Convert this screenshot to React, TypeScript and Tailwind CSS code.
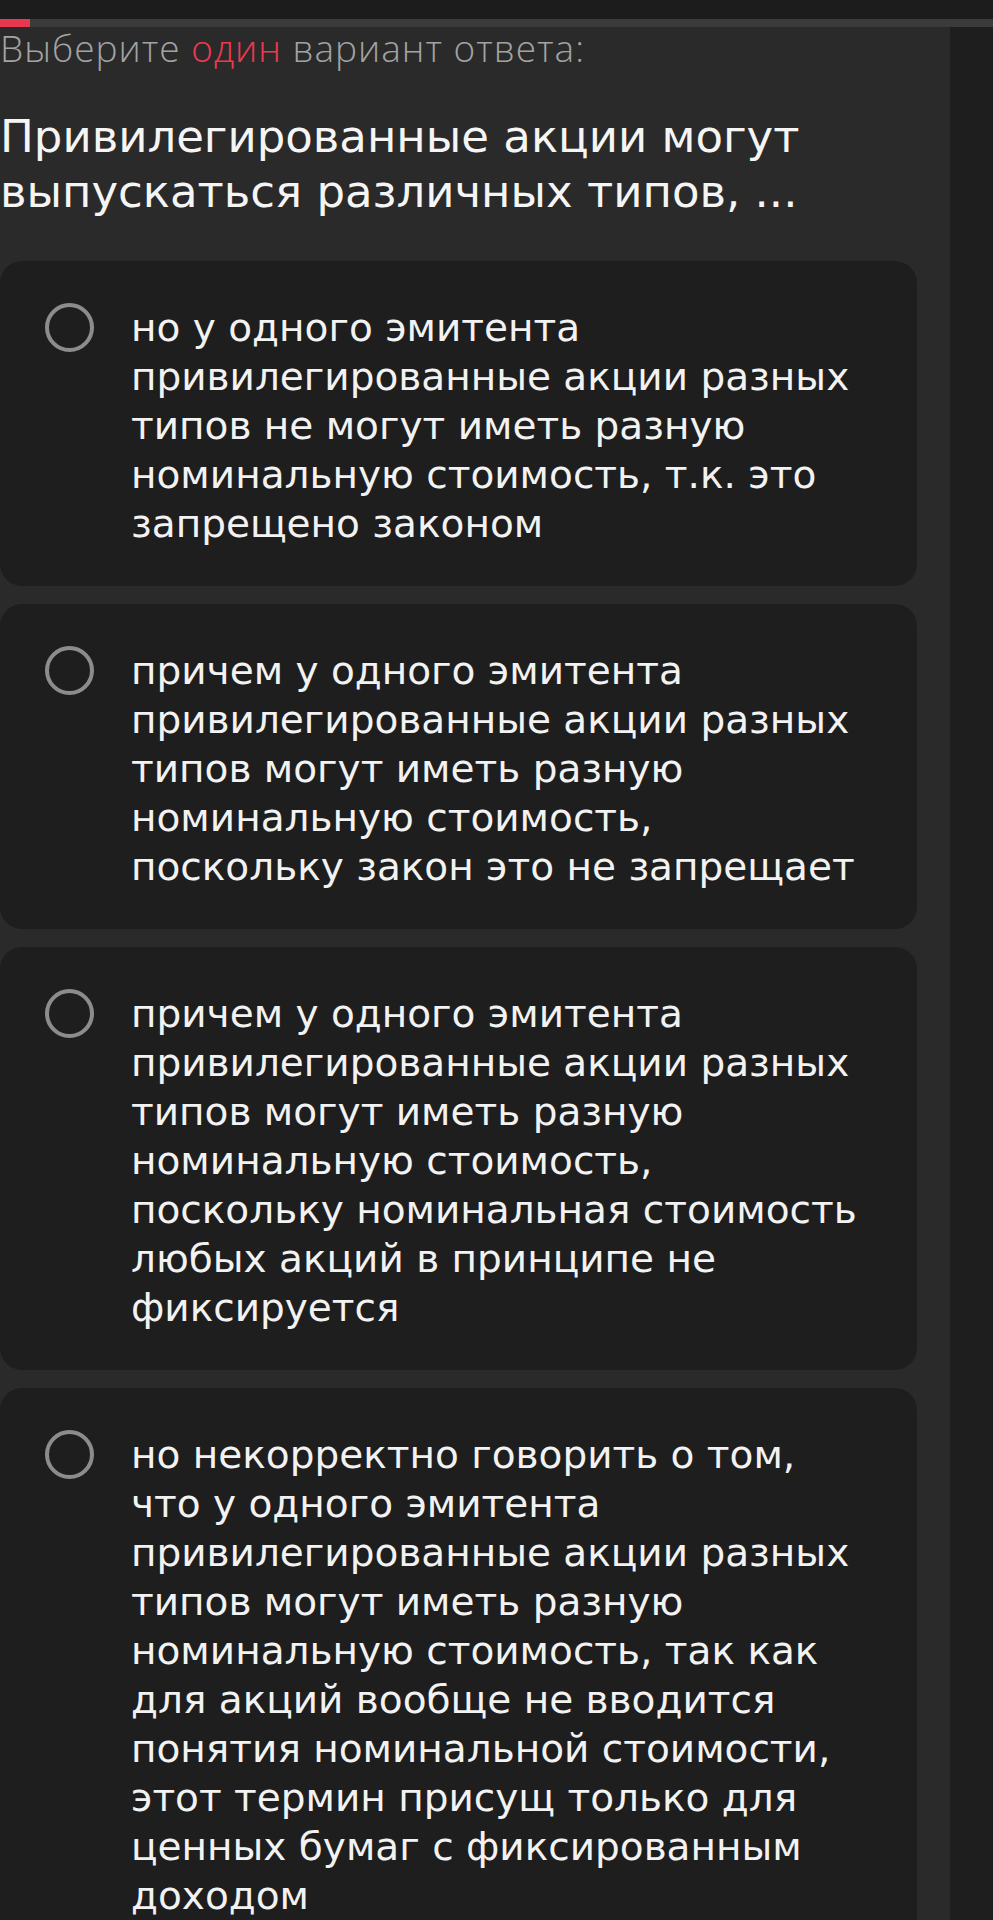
const options: string[][] = [
  [
    "но у одного эмитента",
    "привилегированные акции разных",
    "типов не могут иметь разную",
    "номинальную стоимость, т.к. это",
    "запрещено законом",
  ],
  [
    "причем у одного эмитента",
    "привилегированные акции разных",
    "типов могут иметь разную",
    "номинальную стоимость,",
    "поскольку закон это не запрещает",
  ],
  [
    "причем у одного эмитента",
    "привилегированные акции разных",
    "типов могут иметь разную",
    "номинальную стоимость,",
    "поскольку номинальная стоимость",
    "любых акций в принципе не",
    "фиксируется",
  ],
  [
    "но некорректно говорить о том,",
    "что у одного эмитента",
    "привилегированные акции разных",
    "типов могут иметь разную",
    "номинальную стоимость, так как",
    "для акций вообще не вводится",
    "понятия номинальной стоимости,",
    "этот термин присущ только для",
    "ценных бумаг с фиксированным",
    "доходом",
  ],
];

function Option({ lines }: { lines: string[] }) {
  return (
    <div className="flex items-start gap-[37px] rounded-[22px] bg-[#1e1e1e] pl-[45px] pr-[30px] pt-[42px] pb-[38px]">
      <div className="h-[49px] w-[49px] shrink-0 rounded-full border-[4px] border-[#8c8c8c]" />
      <p className="text-[39px] leading-[49px] text-[#f2f2f2] whitespace-nowrap">
        {lines.map((l, i) => (
          <span key={i} className="block">
            {l}
          </span>
        ))}
      </p>
    </div>
  );
}

export default function App() {
  return (
    <div className="min-h-[1920px] w-[993px] overflow-hidden bg-[#1e1e1e] font-['DejaVu_Sans',sans-serif]">
      {/* top bar + progress */}
      <div className="h-[19px] bg-[#1c1c1c]" />
      <div className="h-[8px] bg-[#3b3b3b]">
        <div className="h-full w-[30px] bg-[#e8384f]" />
      </div>

      <div className="flex">
        <div className="w-[950px] min-h-[1893px] bg-[#2a2a2a] pr-[33px]">
          <div className="font-['Open_Sans',sans-serif] text-[37px] leading-[42px] font-light tracking-[1px] text-[#a3a3a3] whitespace-nowrap">
            Выберите <span className="text-[#ee3a50]">один</span> вариант ответа:
          </div>

          <h1 className="mt-[40px] text-[45px] leading-[55px] text-[#f5f5f5] whitespace-nowrap">
            Привилегированные акции могут
            <br />
            выпускаться различных типов, ...
          </h1>

          <div className="mt-[42px] flex flex-col gap-[18px]">
            {options.map((o, i) => (
              <Option key={i} lines={o} />
            ))}
          </div>
        </div>
        <div className="flex-1 bg-[#1e1e1e]" />
      </div>
    </div>
  );
}
